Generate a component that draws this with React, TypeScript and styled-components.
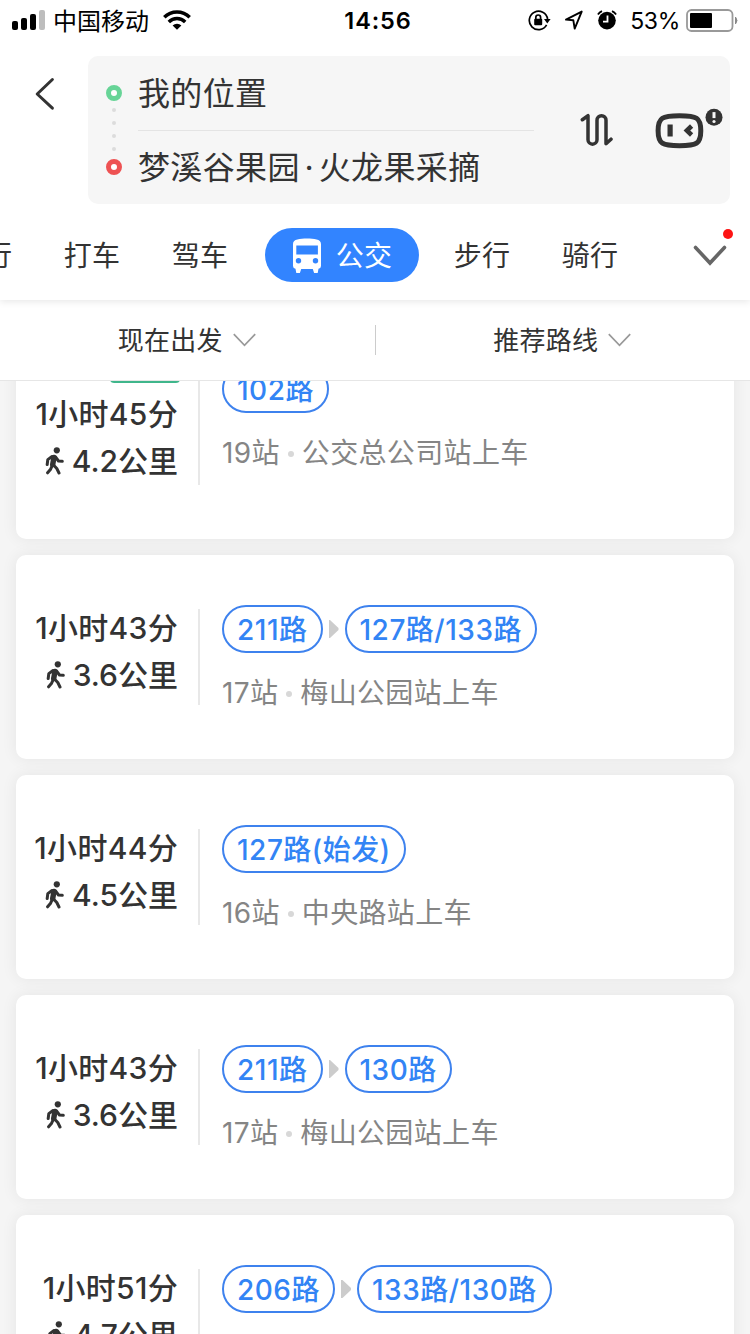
import React from 'react';
import styled, { createGlobalStyle } from 'styled-components';

const Global = createGlobalStyle`
  * { box-sizing: border-box; }
  body {
    margin: 0;
    background: #f5f5f5;
    color: #333;
    font-family: Inter, "Noto Sans CJK SC", sans-serif;
    overflow: hidden;
  }
  svg { display: block; flex: none; }
`;

const Screen = styled.div`
  width: 750px;
  height: 1334px;
  display: flex;
  flex-direction: column;
  overflow: hidden;
`;

const Header = styled.header`
  position: relative;
  z-index: 2;
  flex: none;
  height: 300px;
  background: #fff;
  box-shadow: 0 2px 7px rgba(0, 0, 0, 0.09);
`;

const StatusBar = styled.div`
  display: grid;
  grid-template-columns: 1fr auto 1fr;
  align-items: center;
  height: 40px;
  padding: 0 11px 0 12px;
  color: #000;
`;

const StatusSide = styled.div<{ $end?: boolean }>`
  display: flex;
  align-items: center;
  justify-content: ${(p) => (p.$end ? 'flex-end' : 'flex-start')};
`;

const Carrier = styled.span`
  margin: 0 14px 0 8px;
  padding-top: 3px;
  font-size: 24px;
  line-height: 36px;
`;

const Clock = styled.span`
  padding: 2px 0 0 5px;
  font-size: 23.5px;
  font-weight: 600;
  letter-spacing: 0.9px;
  line-height: 38px;
`;

const BatteryText = styled.span`
  margin: 0 6px 0 13px;
  padding-top: 2px;
  font-size: 23px;
  letter-spacing: -0.3px;
  line-height: 38px;
`;

const SearchRow = styled.div`
  display: flex;
  align-items: flex-start;
  padding: 16px 20px 0 0;
`;

const BackButton = styled.div`
  width: 88px;
  padding: 21px 0 0 34px;
`;

const SearchBox = styled.div`
  flex: 1;
  display: flex;
  height: 148px;
  border-radius: 10px;
  background: #f6f6f6;
`;

const Markers = styled.div`
  display: flex;
  flex-direction: column;
  align-items: center;
  width: 50px;
  padding: 29px 0 0 2px;
`;

const Ring = styled.div<{ $color: string }>`
  width: 16px;
  height: 16px;
  border: 5px solid ${(p) => p.$color};
  border-radius: 50%;
  background: #fff;
`;

const Dots = styled.div`
  display: flex;
  flex-direction: column;
  justify-content: space-between;
  height: 43px;
  margin: 7px 0 8px;
`;

const Dot = styled.i`
  width: 4px;
  height: 4px;
  border-radius: 50%;
  background: #dcdcdc;
`;

const Places = styled.div`
  width: 396px;
`;

const Place = styled.div`
  height: 74px;
  font-size: 32px;
  letter-spacing: 0.35px;
  line-height: 76px;
  white-space: nowrap;

  & + & {
    border-top: 1px solid #e4e4e4;
    line-height: 74px;
  }
`;

const MidDot = styled.span`
  display: inline-block;
  width: 19px;
  text-align: center;
`;

const SearchTools = styled.div`
  display: flex;
  align-items: flex-start;
  gap: 40px;
  padding: 50px 0 0 46px;

  svg:first-child {
    margin-top: 7px;
  }
`;

const Tabs = styled.nav`
  display: flex;
  align-items: center;
  height: 96px;
  overflow: hidden;
`;

const TabTrack = styled.div`
  display: flex;
  align-items: center;
  flex: none;
  height: 54px;
  margin: 6px 0 0 -70px;
`;

const Tab = styled.div<{ $active?: boolean }>`
  display: flex;
  align-items: center;
  justify-content: center;
  gap: 14px;
  width: ${(p) => (p.$active ? 154 : 108)}px;
  height: 54px;
  margin: ${(p) => (p.$active ? '0 9px 0 11px' : '0')};
  border-radius: 27px;
  background: ${(p) => (p.$active ? '#3284ff' : 'transparent')};
  color: ${(p) => (p.$active ? '#fff' : '#333')};
  font-size: 28px;
  letter-spacing: 0.2px;
  line-height: 52px;
`;

const TabLabel = styled.span`
  padding-top: 2px;
`;

const MoreTabs = styled.div`
  position: relative;
  margin: 7px 0 0 49px;
`;

const RedDot = styled.i`
  position: absolute;
  top: -16px;
  left: 30px;
  width: 10px;
  height: 10px;
  border-radius: 50%;
  background: #fd1414;
`;

const Filters = styled.div`
  position: relative;
  z-index: 1;
  flex: none;
  display: flex;
  align-items: center;
  height: 81px;
  border-bottom: 1px solid #e6e6e6;
  background: #fff;
`;

const Filter = styled.div`
  flex: 1;
  display: flex;
  align-items: center;
  justify-content: center;
  gap: 10px;
  padding-right: 1px;
  font-size: 26px;
  letter-spacing: 0.3px;
  line-height: 40px;
`;

const FilterLabel = styled.span`
  padding-top: 2px;
`;

const FilterRule = styled.div`
  width: 1px;
  height: 30px;
  background: #ccc;
`;

const List = styled.main`
  flex: 1;
  min-height: 0;
  overflow: hidden;
`;

const ListTrack = styled.div`
  display: flex;
  flex-direction: column;
  gap: 16px;
  margin-top: -66px;
  padding: 0 16px;
`;

const Card = styled.article`
  display: flex;
  align-items: stretch;
  flex: none;
  padding: 54px 0;
  border-radius: 10px;
  background: #fff;
  box-shadow: 0 0 16px rgba(0, 0, 0, 0.07);
`;

const Summary = styled.div`
  display: flex;
  flex-direction: column;
  align-items: flex-end;
  width: 184px;
  padding-right: 20px;
  border-right: 2px solid #e8e8e8;
  font-size: 30px;
  font-weight: 500;
`;

const Badge = styled.div`
  width: 70px;
  height: 22px;
  margin: -8px -2px 12px 0;
  border-radius: 4px;
  background: #3fb68b;
`;

const Duration = styled.div`
  height: 48px;
  margin-top: -6px;
  letter-spacing: 0.3px;
  line-height: 50px;
  white-space: nowrap;
`;

const Walk = styled.div`
  display: flex;
  align-items: center;
  gap: 8px;
  height: 48px;
  line-height: 49px;
  white-space: nowrap;

  & > span {
    height: 48px;
  }
`;

const Detail = styled.div`
  margin: -4px 0 -8px;
  padding-left: 22px;
`;

const Lines = styled.div`
  display: flex;
  align-items: center;
`;

const Line = styled.div`
  height: 48px;
  padding: 0 13px;
  border: 2px solid #3e82ee;
  border-radius: 24px;
  color: #3284f5;
  font-size: 28px;
  font-weight: 500;
  letter-spacing: 0.5px;
  line-height: 47px;
  white-space: nowrap;
`;

const Stops = styled.div`
  display: flex;
  align-items: center;
  height: 40px;
  margin-top: 20px;
  color: #858585;
  font-size: 28px;
  letter-spacing: 0.35px;
  line-height: 40px;
  white-space: nowrap;
`;

const StopDot = styled.i`
  width: 6px;
  height: 6px;
  margin: 1px 8px 0;
  border-radius: 50%;
  background: #d8d8d8;
`;

const SignalIcon = () => (
  <svg width="33" height="20" viewBox="0 0 33 20">
    <rect x="0" y="11" width="6" height="9" rx="2" />
    <rect x="9" y="8" width="6" height="12" rx="2" />
    <rect x="18" y="4" width="6" height="16" rx="2" />
    <rect x="27" y="0" width="6" height="20" rx="2" fill="#bdbdbd" />
  </svg>
);

const WifiIcon = () => (
  <svg width="28" height="20" viewBox="0 0 28 20" fill="none" stroke="#000" strokeWidth="3.5">
    <path d="M1.3 7.2a18 18 0 0 1 25.4 0" />
    <path d="M5.8 11.9a11.8 11.8 0 0 1 16.4 0" />
    <path d="M14 19.8l-4.4-4.3a6.4 6.4 0 0 1 8.8 0z" fill="#000" stroke="none" />
  </svg>
);

const LockIcon = () => (
  <svg width="23" height="21" viewBox="0 0 23 21" fill="none" stroke="#000" strokeWidth="1.7">
    <path d="M18.6 14.8A9.2 9.2 0 1 1 19.6 9" />
    <path d="M16 9h6.6l-3.3 4.4z" fill="#000" stroke="none" />
    <rect x="6.2" y="8.8" width="8" height="6.4" rx="1" fill="#000" stroke="none" />
    <path d="M7.8 9.5V7.4a2.4 2.4 0 0 1 4.8 0v2.1" />
  </svg>
);

const LocationIcon = () => (
  <svg width="18" height="20" viewBox="0 0 18 20" fill="none" stroke="#000" strokeWidth="1.9" strokeLinejoin="round">
    <path d="M1 9.6L16.7 1.6 9.7 18.6 8.3 10.2z" />
  </svg>
);

const AlarmIcon = () => (
  <svg width="20" height="20" viewBox="0 0 20 20">
    <circle cx="10" cy="10.6" r="8.8" />
    <path d="M.9 4.6A11 11 0 0 1 5 1.1M19.1 4.6A11 11 0 0 0 15 1.1" fill="none" stroke="#000" strokeWidth="1.8" />
    <path d="M10.5 5.6v6H6" fill="none" stroke="#fff" strokeWidth="1.8" />
  </svg>
);

const BatteryIcon = () => (
  <svg width="53" height="23" viewBox="0 0 53 23">
    <rect x="1" y="1" width="45.5" height="21" rx="4.5" fill="none" stroke="#999" strokeWidth="1.8" />
    <rect x="4" y="4" width="22" height="15" rx="1" />
    <path d="M49.5 8q3 3.5 0 7z" fill="#888" stroke="#888" />
  </svg>
);

const BackIcon = () => (
  <svg width="22" height="34" viewBox="0 0 22 34" fill="none" stroke="#333" strokeWidth="3" strokeLinecap="round" strokeLinejoin="round">
    <path d="M18.4 2.5L3.2 17l15.2 14.2" />
  </svg>
);

const SwapIcon = () => (
  <svg width="34" height="34" viewBox="0 0 34 34" fill="none" stroke="#333" strokeWidth="3.5" strokeLinecap="round" strokeLinejoin="round">
    <path d="M2.3 6.7L8 2.7v24a4.5 4.5 0 0 0 9 0V7.2a4.5 4.5 0 0 1 9 0V30.7l5-4.5" />
  </svg>
);

const RobotIcon = () => (
  <svg width="70" height="46" viewBox="-0.6 -0.5 70 46">
    <path d="M24.9 9.2C42 9.2 46.2 11 46.2 24.2S42 39.2 24.9 39.2 3.5 37.4 3.5 24.2 7.8 9.2 24.9 9.2z" fill="none" stroke="#333" strokeWidth="5" />
    <rect x="12.9" y="18" width="5.2" height="12" fill="#333" />
    <path d="M37 19.5L32.3 24l4.7 4.5" fill="none" stroke="#333" strokeWidth="4.6" />
    <circle cx="59.4" cy="10.8" r="8.5" fill="#333" />
    <path d="M59.4 5.6v6" stroke="#f6f6f6" strokeWidth="3" />
    <circle cx="59.4" cy="15" r="1.6" fill="#f6f6f6" />
  </svg>
);

const BusIcon = () => (
  <svg width="30" height="35" viewBox="0 0 30 35">
    <path fill="#fff" fillRule="evenodd" d="M1 6C1 1 8 .5 15 .5S29 1 29 6v22a3 3 0 0 1-2.5 2.8L25.7 35h-3.6l-1.3-4H9.2l-1.3 4H4.3l-.8-4.2A3 3 0 0 1 1 28zM4.3 7.5v9h21.6v-9z" />
    <circle cx="6.5" cy="22.8" r="2.7" fill="#3284ff" />
    <circle cx="23.5" cy="22.8" r="2.7" fill="#3284ff" />
  </svg>
);

const ChevronDown = ({ large }: { large?: boolean }) =>
  large ? (
    <svg width="34" height="22" viewBox="0 0 34 22" fill="none" stroke="#666" strokeWidth="3.6" strokeLinecap="round">
      <path d="M2.5 2.5L17 18l14.5-15.5" />
    </svg>
  ) : (
    <svg width="23" height="14" viewBox="0 0 23 14" fill="none" stroke="#999" strokeWidth="1.7">
      <path d="M.8 1.2L11.5 12.3 22.2 1.2" />
    </svg>
  );

const WalkIcon = () => (
  <svg width="19" height="28" viewBox="0 0 19 28" fill="none" stroke="#333" strokeWidth="3" strokeLinecap="round" strokeLinejoin="round">
    <circle cx="11.8" cy="3.3" r="3.1" fill="#333" stroke="none" />
    <path d="M7 9.5L2.8 12.6 2.2 17.5M10.5 10l3 4 3.8.3M7.5 18L5.4 22.6 2.6 25.8M8 17.5l3.8 4L14 26" />
    <path d="M9 10.5L7.7 17.5" strokeWidth="5.4" />
  </svg>
);

const NextArrow = styled.i`
  width: 10px;
  height: 18px;
  margin: 0 6px;
  background: #ccc;
  clip-path: polygon(0 0, 15% 0, 100% 44%, 100% 56%, 15% 100%, 0 100%);
`;

type Route = {
  badge?: boolean;
  time: string;
  walk: string;
  lines: string[];
  count: string;
  stop: string;
};

const routes: Route[] = [
  { badge: true, time: '1小时45分', walk: '4.2公里', lines: ['102路'], count: '19站', stop: '公交总公司站上车' },
  { time: '1小时43分', walk: '3.6公里', lines: ['211路', '127路/133路'], count: '17站', stop: '梅山公园站上车' },
  { time: '1小时44分', walk: '4.5公里', lines: ['127路(始发)'], count: '16站', stop: '中央路站上车' },
  { time: '1小时43分', walk: '3.6公里', lines: ['211路', '130路'], count: '17站', stop: '梅山公园站上车' },
  { time: '1小时51分', walk: '4.7公里', lines: ['206路', '133路/130路'], count: '18站', stop: '梅山公园站上车' },
];

const RouteCard = ({ route }: { route: Route }) => (
  <Card>
    <Summary>
      {route.badge && <Badge />}
      <Duration>{route.time}</Duration>
      <Walk>
        <WalkIcon />
        <span>{route.walk}</span>
      </Walk>
    </Summary>
    <Detail>
      <Lines>
        {route.lines.map((line, i) => (
          <React.Fragment key={line}>
            {i > 0 && <NextArrow />}
            <Line>{line}</Line>
          </React.Fragment>
        ))}
      </Lines>
      <Stops>
        {route.count}
        <StopDot />
        {route.stop}
      </Stops>
    </Detail>
  </Card>
);

const StatusIcons = styled.div`
  display: flex;
  align-items: center;
  gap: 14px;
`;

export default function App() {
  return (
    <Screen>
      <Global />
      <Header>
        <StatusBar>
          <StatusSide>
            <SignalIcon />
            <Carrier>中国移动</Carrier>
            <WifiIcon />
          </StatusSide>
          <Clock>14:56</Clock>
          <StatusSide $end>
            <StatusIcons>
              <LockIcon />
              <LocationIcon />
              <AlarmIcon />
            </StatusIcons>
            <BatteryText>53%</BatteryText>
            <BatteryIcon />
          </StatusSide>
        </StatusBar>
        <SearchRow>
          <BackButton>
            <BackIcon />
          </BackButton>
          <SearchBox>
            <Markers>
              <Ring $color="#67d497" />
              <Dots>
                <Dot />
                <Dot />
                <Dot />
                <Dot />
              </Dots>
              <Ring $color="#ee5253" />
            </Markers>
            <Places>
              <Place>我的位置</Place>
              <Place>
                梦溪谷果园<MidDot>·</MidDot>火龙果采摘
              </Place>
            </Places>
            <SearchTools>
              <SwapIcon />
              <RobotIcon />
            </SearchTools>
          </SearchBox>
        </SearchRow>
        <Tabs>
          <TabTrack>
            <Tab><TabLabel>飞行</TabLabel></Tab>
            <Tab><TabLabel>打车</TabLabel></Tab>
            <Tab><TabLabel>驾车</TabLabel></Tab>
            <Tab $active>
              <BusIcon />
              <TabLabel>公交</TabLabel>
            </Tab>
            <Tab><TabLabel>步行</TabLabel></Tab>
            <Tab><TabLabel>骑行</TabLabel></Tab>
          </TabTrack>
          <MoreTabs>
            <ChevronDown large />
            <RedDot />
          </MoreTabs>
        </Tabs>
      </Header>
      <Filters>
        <Filter>
          <FilterLabel>现在出发</FilterLabel>
          <ChevronDown />
        </Filter>
        <FilterRule />
        <Filter>
          <FilterLabel>推荐路线</FilterLabel>
          <ChevronDown />
        </Filter>
      </Filters>
      <List>
        <ListTrack>
          {routes.map((route, i) => (
            <RouteCard key={i} route={route} />
          ))}
        </ListTrack>
      </List>
    </Screen>
  );
}
